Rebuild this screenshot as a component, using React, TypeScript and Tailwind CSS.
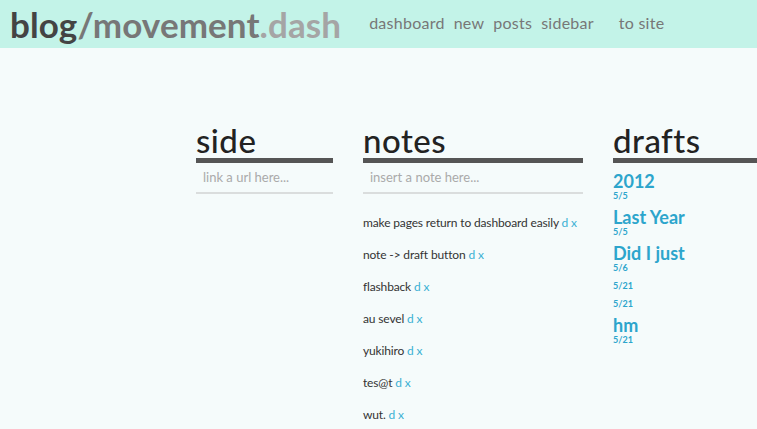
const notes = [
  "make pages return to dashboard easily",
  "note -> draft button",
  "flashback",
  "au sevel",
  "yukihiro",
  "tes@t",
  "wut.",
];

const drafts = [
  { title: "2012", date: "5/5" },
  { title: "Last Year", date: "5/5" },
  { title: "Did I just", date: "5/6" },
  { title: "", date: "5/21" },
  { title: "", date: "5/21" },
  { title: "hm", date: "5/21" },
];

const nav = ["dashboard", "new", "posts", "sidebar"];

function Heading({ children }: { children: string }) {
  return (
    <h2 className="text-[33px] leading-[32px] font-medium tracking-[0.5px] text-[#222] border-b-[5px] border-[#555] pb-[2px]">
      {children}
    </h2>
  );
}

export default function App() {
  return (
    <div className="w-[757px] h-[429px] overflow-hidden bg-[#f5fbfb] font-['Lato',sans-serif]">
      {/* Header */}
      <header className="h-[48px] bg-[#c3f3e8] flex items-center px-[10px]">
        <h1 className="text-[35px] font-bold tracking-[0.1px] leading-none">
          <span className="text-[#444]">blog</span>
          <span className="text-[#777]">/movement</span>
          <span className="text-[#a5a5a5]">.dash</span>
        </h1>
        <nav className="flex items-center ml-[28px] mb-[2px] text-[16px] tracking-[0.25px] text-[#777] gap-[9px]">
          {nav.map((n) => (
            <a key={n}>{n}</a>
          ))}
          <a className="ml-[16px]">to site</a>
        </nav>
      </header>

      {/* Columns */}
      <div className="flex gap-[30px] pl-[196px] pt-[76px]">
        <section className="w-[137px] shrink-0">
          <Heading>side</Heading>
          <div className="h-[31px] border-b-2 border-[#dadddd] flex items-center px-[7px] text-[13px] text-[#aaa]">
            link a url here...
          </div>
        </section>

        <section className="w-[220px] shrink-0">
          <Heading>notes</Heading>
          <div className="h-[31px] border-b-2 border-[#dadddd] flex items-center px-[7px] text-[13px] text-[#aaa]">
            insert a note here...
          </div>
          <ul className="mt-[21px] text-[12px] leading-[16px] tracking-[-0.15px] text-[#333] whitespace-nowrap">
            {notes.map((n) => (
              <li key={n} className="mb-[16px]">
                {n} <span className="text-[#3ab0d3]">d x</span>
              </li>
            ))}
          </ul>
        </section>

        <section className="w-[200px] shrink-0">
          <Heading>drafts</Heading>
          <ul className="mt-[9px]">
            {drafts.map((d, i) => (
              <li key={i} className="mb-[7px] text-[#2ca5cc]">
                {d.title && (
                  <div className="text-[18px] leading-[18px] font-bold">{d.title}</div>
                )}
                <div className="text-[9px] leading-[11px] font-bold">{d.date}</div>
              </li>
            ))}
          </ul>
        </section>
      </div>
    </div>
  );
}
